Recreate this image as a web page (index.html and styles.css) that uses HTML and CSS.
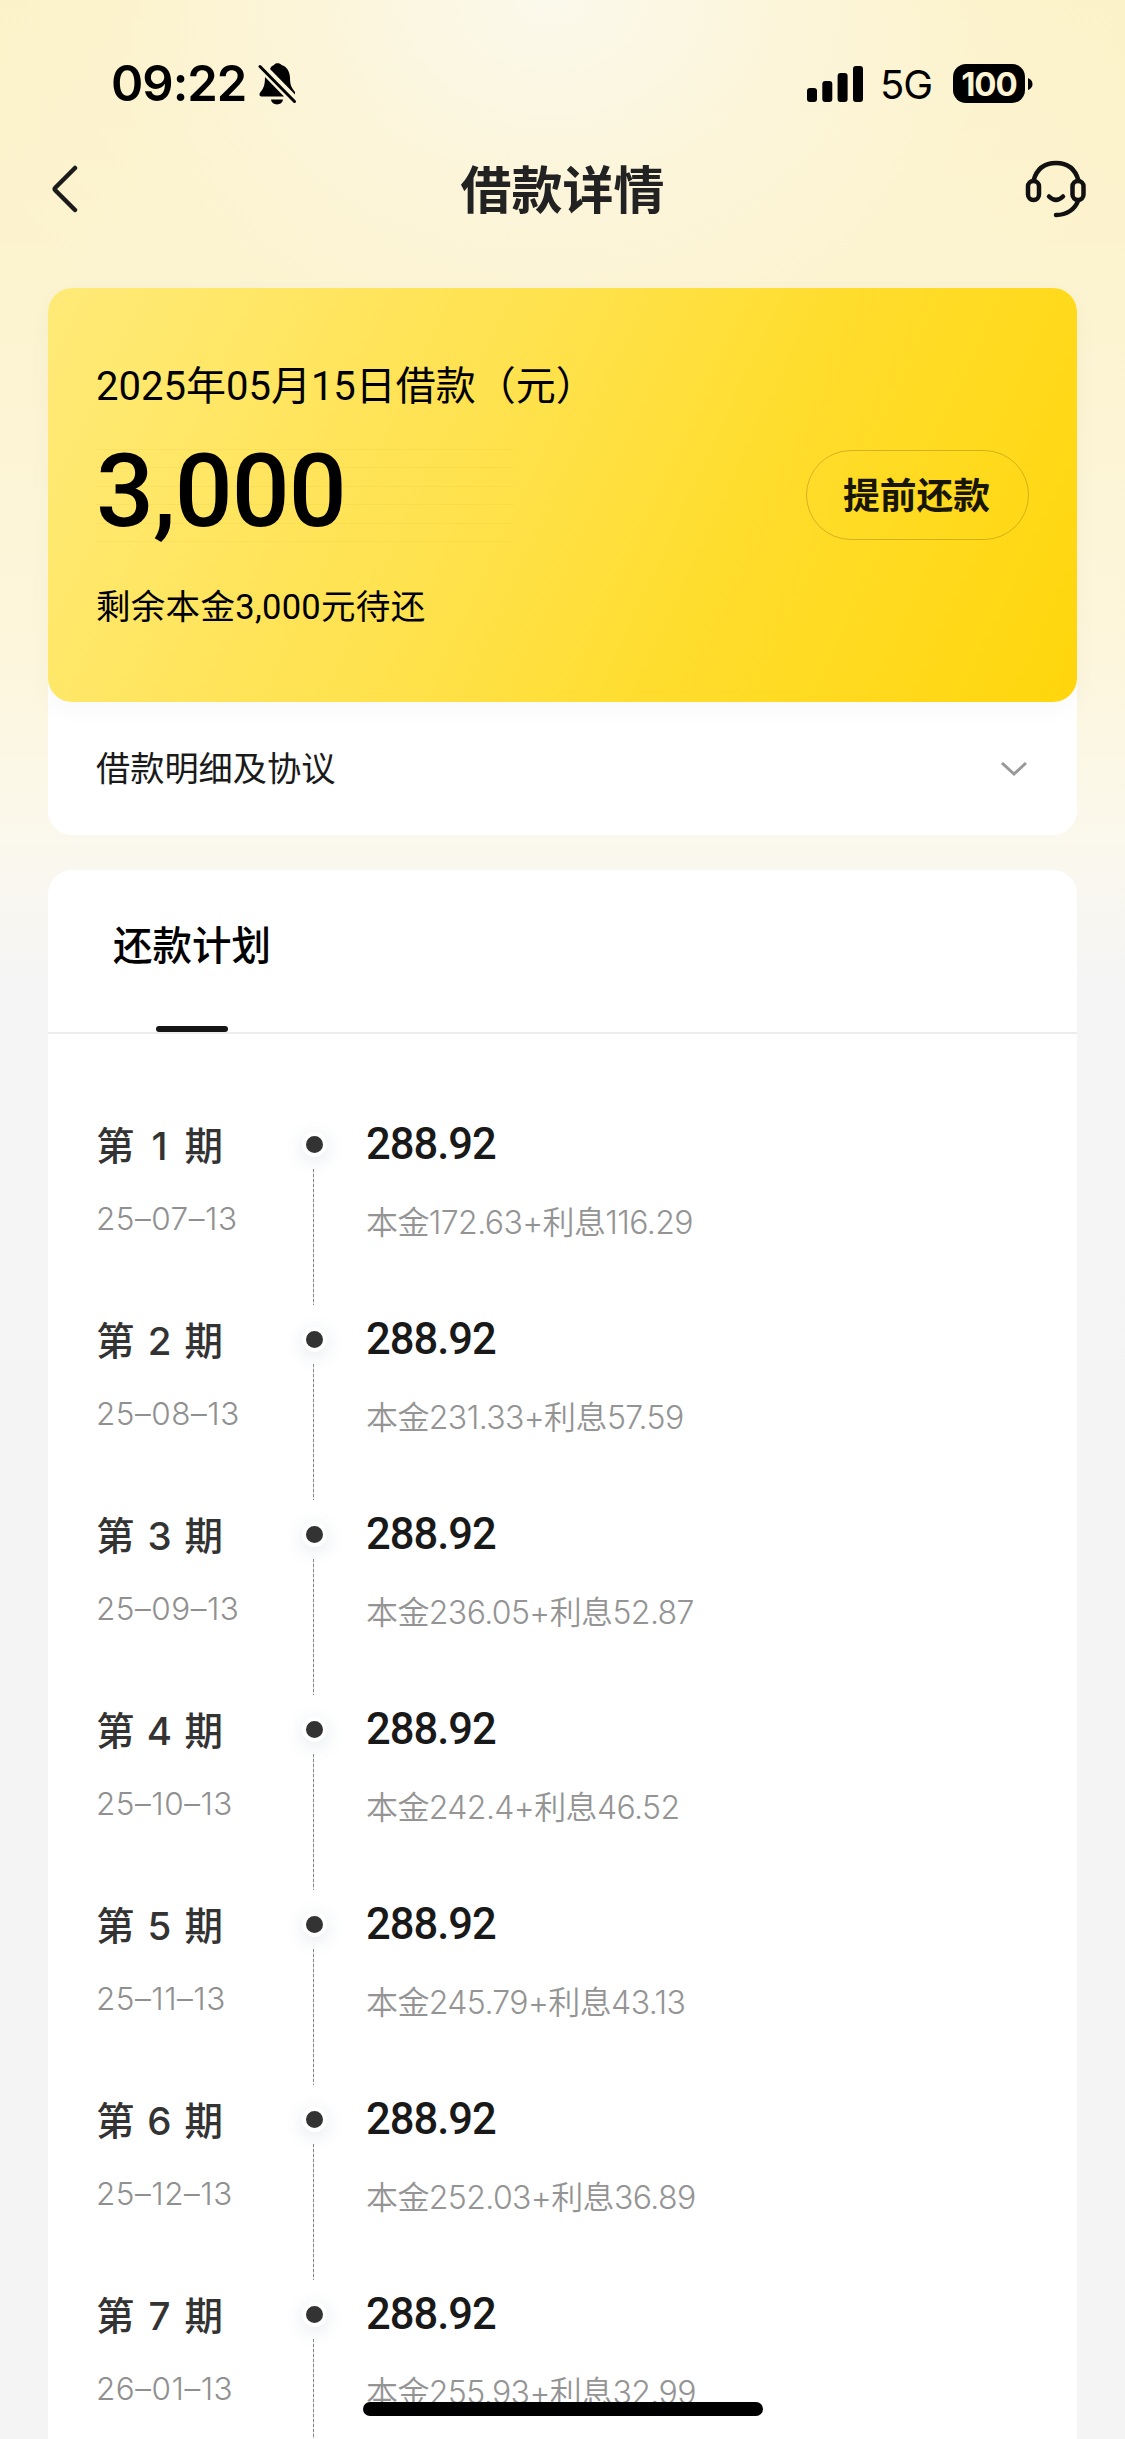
FILE: index.html
```html
<!DOCTYPE html>
<html lang="zh-CN">
<head>
<meta charset="utf-8">
<title>借款详情</title>
<link rel="stylesheet" href="styles.css">
</head>
<body>
<div class="screen">
  <div class="status">
    <span class="time">09:22</span>
    <svg class="bell" width="40" height="44" viewBox="0 0 40 44">
      <path d="M12 7C13 4 15 3.500 16 3C17 0.500 22 0.500 23.500 3C29 4.500 32 10 32 16C32 22 33 25 37 30V32.500Z"/>
      <path d="M7 15L26 34.500H4C1 34.500 1 32 2.500 30C6 26 7 22 7 15Z"/>
      <path d="M13 37.500H25C24 44 14 44 13 37.500Z"/>
      <path class="slash" d="M2 4.500L36.500 39.500"/>
    </svg>
    <svg class="signal" width="56" height="36" viewBox="0 0 56 36">
      <rect x="0" y="22" width="10" height="14" rx="3"/>
      <rect x="15.300" y="15" width="10" height="21" rx="3"/>
      <rect x="30.600" y="7" width="10" height="29" rx="3"/>
      <rect x="46" y="0" width="10" height="36" rx="3"/>
    </svg>
    <span class="network">5G</span>
    <span class="battery">100</span>
    <svg class="nub" width="5" height="14" viewBox="0 0 5 14"><path d="M0 1Q4.500 3 4.500 7T0 13Z"/></svg>
  </div>
  <header class="nav">
    <svg class="back" width="28" height="50" viewBox="0 0 28 50"><path d="M25 4L5.500 23.500Q4 25 5.500 26.500L25 46"/></svg>
    <h1 class="title">借款详情</h1>
    <svg class="service" width="62" height="60" viewBox="0 0 62 60">
      <path d="M8.500 21.500C12 9 20 4 31 4S50 9 53.500 21.500"/>
      <rect x="3" y="22" width="11" height="19" rx="5.500"/>
      <rect x="47.500" y="22" width="11" height="19" rx="5.500"/>
      <path d="M24 37.500Q31 44.500 38 37.500"/>
      <path d="M53 42C50 50 42 56 31 56"/>
    </svg>
  </header>
  <main class="content">
    <section class="loan">
      <div class="hero">
        <div class="summary">
          <p class="caption">2025年05月15日借款（元）</p>
          <p class="amount">3,000</p>
          <p class="remain">剩余本金3,000元待还</p>
        </div>
        <button class="repay">提前还款</button>
      </div>
      <div class="details">
        <span>借款明细及协议</span>
        <svg class="chevron" width="28" height="18" viewBox="0 0 28 18"><path d="M2 3L14 14L26 3"/></svg>
      </div>
    </section>
    <section class="plan">
      <div class="tabs"><span class="tab">还款计划</span></div>
      <ol class="list">
        <li class="row"><div class="term"><b>第<i>1</i>期</b><time>25–07–13</time></div><div class="rail"><span class="dot"></span></div><div class="pay"><strong>288.92</strong><span>本金172.63+利息116.29</span></div></li>
        <li class="row"><div class="term"><b>第<i>2</i>期</b><time>25–08–13</time></div><div class="rail"><span class="dot"></span></div><div class="pay"><strong>288.92</strong><span>本金231.33+利息57.59</span></div></li>
        <li class="row"><div class="term"><b>第<i>3</i>期</b><time>25–09–13</time></div><div class="rail"><span class="dot"></span></div><div class="pay"><strong>288.92</strong><span>本金236.05+利息52.87</span></div></li>
        <li class="row"><div class="term"><b>第<i>4</i>期</b><time>25–10–13</time></div><div class="rail"><span class="dot"></span></div><div class="pay"><strong>288.92</strong><span>本金242.4+利息46.52</span></div></li>
        <li class="row"><div class="term"><b>第<i>5</i>期</b><time>25–11–13</time></div><div class="rail"><span class="dot"></span></div><div class="pay"><strong>288.92</strong><span>本金245.79+利息43.13</span></div></li>
        <li class="row"><div class="term"><b>第<i>6</i>期</b><time>25–12–13</time></div><div class="rail"><span class="dot"></span></div><div class="pay"><strong>288.92</strong><span>本金252.03+利息36.89</span></div></li>
        <li class="row"><div class="term"><b>第<i>7</i>期</b><time>26–01–13</time></div><div class="rail"><span class="dot"></span></div><div class="pay"><strong>288.92</strong><span>本金255.93+利息32.99</span></div></li>
      </ol>
    </section>
  </main>
  <div class="home"></div>
</div>
</body>
</html>
```
FILE: styles.css
```css
* { box-sizing: border-box; }
body, h1, p, ol { margin: 0; padding: 0; }
body { width: 1125px; }

.screen {
  position: relative;
  width: 1125px;
  height: 2439px;
  overflow: hidden;
  font-family: Roboto, "Noto Sans CJK SC", sans-serif;
  color: #000;
  background:
    radial-gradient(ellipse 620px 480px at 550px 0, rgba(251, 249, 236, 1), rgba(252, 246, 224, 0.7) 40%, rgba(252, 244, 214, 0.3) 72%, rgba(253, 243, 208, 0)),
    linear-gradient(180deg, #fcf2c8 0, #fcf3d0 300px, #fdf6dc 650px, #fbf8ec 830px, #f5f5f5 980px, #f5f5f5 1290px, #f4f4f4 1400px);
}

.status { display: flex; align-items: flex-start; height: 130px; padding: 0 92px 0 111px; font-family: Inter, sans-serif; }
.time { width: 147px; margin-top: 54px; font-size: 49px; line-height: 60px; font-weight: 600; letter-spacing: -1px; }
.bell { margin-top: 62px; }
.bell .slash { fill: none; stroke: #000; stroke-width: 3; stroke-linecap: round; }
.signal { margin: 66px 0 0 auto; }
.network { margin: 61px 18px 0 17px; width: 55px; font-size: 40px; line-height: 48px; letter-spacing: -1px; white-space: nowrap; }
.battery { margin-top: 64px; width: 72px; height: 39px; border-radius: 13px; background: #000; color: #fcf4d3; font-size: 33px; line-height: 40px; font-weight: 700; text-align: center; letter-spacing: -1px; }
.nub { margin: 77px 0 0 3px; }

.nav { display: flex; align-items: center; justify-content: space-between; height: 118px; padding: 0 38px 0 50px; }
.back { fill: none; stroke: #1b1b1b; stroke-width: 4.5; stroke-linecap: round; }
.title { font-size: 51px; line-height: 70px; font-weight: 700; color: #222; padding: 5px 0 0 22px; }
.service { fill: none; stroke: #111; stroke-width: 4.5; stroke-linecap: round; }

.content { padding: 40px 48px 0; }
.loan { border-radius: 24px; background: #fff; height: 547px; }
.hero { display: flex; justify-content: space-between; align-items: center; height: 414px; padding: 0 48px; border-radius: 24px; background: linear-gradient(115deg, #ffea78 0, #ffe14a 45%, #ffdd2e 65%, #ffd60c 100%); box-shadow: 0 8px 24px rgba(0, 0, 0, 0.03); }
.summary { display: flex; flex-direction: column; }
.caption { font-size: 40px; line-height: 58px; font-weight: 400; white-space: nowrap; padding-top: 2px; }
.amount { font-size: 102px; line-height: 120px; font-weight: 500; margin-top: 15px; letter-spacing: -1px; background: repeating-linear-gradient(180deg, rgba(190, 150, 0, 0.08) 0 1px, transparent 1px 18.5px) 0 18px / 418px 94px no-repeat; }
.remain { font-size: 34.5px; line-height: 50px; margin-top: 31px; margin-bottom: 2px; font-weight: 400; letter-spacing: 0.3px; }
.repay { width: 223px; height: 90px; padding: 0 2px 4px 0; border: 1.5px solid rgba(0, 0, 0, 0.18); border-radius: 45px; background: none; font: 700 36.800px/60px "Noto Sans CJK SC", sans-serif; color: #191600; }
.details { display: flex; align-items: center; justify-content: space-between; height: 133px; padding: 0 49px 0 48px; font-size: 34.2px; line-height: 50px; font-weight: 400; color: #1a1a1a; }
.details span { margin-top: 1px; }
.chevron { fill: none; stroke: #999; stroke-width: 3; }

.plan { margin-top: 35px; border-radius: 24px 24px 0 0; background: #fff; }
.tabs { display: flex; height: 164px; padding-left: 65px; border-bottom: 2px solid #ededed; }
.tab { position: relative; font-size: 39.5px; line-height: 58px; padding-top: 48px; font-weight: 500; }
.tab::after { content: ""; position: absolute; left: 43px; bottom: 0; width: 72px; height: 6px; border-radius: 3px; background: #151515; }
.list { list-style: none; padding: 81px 48px 0; }
.row { display: grid; grid-template-columns: 208px 62px 1fr; height: 195px; }
.term, .pay { display: flex; flex-direction: column; white-space: nowrap; }
.term b { display: flex; width: 127px; justify-content: space-between; align-items: baseline; margin-top: 2px; height: 58px; font-size: 38.500px; line-height: 58px; font-weight: 500; color: #333; }
.term i { font-style: normal; font-family: Inter, sans-serif; }
.term time { margin-top: 24px; font-family: Inter, sans-serif; font-size: 31.5px; line-height: 40px; font-weight: 300; color: #909090; letter-spacing: 0.5px; }
.pay strong { padding-top: 1px; font-size: 43.5px; line-height: 58px; font-weight: 500; color: #191919; letter-spacing: -1px; }
.pay span { margin-top: 25px; font-family: Inter, "Noto Sans CJK SC", sans-serif; font-size: 32px; line-height: 48px; font-weight: 350; color: #949494; letter-spacing: -0.6px; }
.rail { display: flex; flex-direction: column; align-items: flex-start; }
.dot { flex: none; width: 25px; height: 25px; margin: 17px 0 12px -2px; border: 4px solid #fff; border-radius: 50%; background: #333; box-shadow: 0 4px 18px rgba(90, 110, 150, 0.16); }
.rail::after { content: ""; width: 1px; height: 136px; margin-left: 9px; background: repeating-linear-gradient(180deg, #888 0 3px, #ddd 3px 5px); }

.home { position: absolute; left: 363px; bottom: 23px; width: 400px; height: 14px; border-radius: 7px; background: #000; }
```
